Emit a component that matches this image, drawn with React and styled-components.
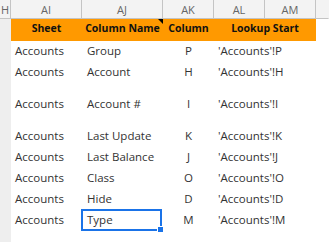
import styled, { createGlobalStyle } from 'styled-components';

const GlobalStyle = createGlobalStyle`
  html, body {
    margin: 0;
    padding: 0;
    background: #ffffff;
  }
  body {
    font-family: "Open Sans", "Liberation Sans", sans-serif;
  }
`;

const Sheet = styled.div`
  width: 329px;
  height: 242px;
  overflow: hidden;
  background: #ffffff;
  display: grid;
  grid-template-columns: 11px 71px 81px 51px 51px 51px 1fr;
  grid-template-rows: 19px 22px 21px 21px 32px 32px 21px 21px 21px 21px 1fr;
`;

const ColHead = styled.div`
  box-sizing: border-box;
  background: #f3f3f3;
  border-right: 1px solid ${(p) => (p.$last ? 'transparent' : '#c4c4c4')};
  border-bottom: 1px solid #c4c4c4;
  color: #666666;
  font-size: 11px;
  display: flex;
  align-items: center;
  justify-content: ${(p) => (p.$left ? 'flex-end' : 'center')};
  padding-right: ${(p) => (p.$left ? '1px' : '0')};
  overflow: hidden;
  white-space: nowrap;
`;

const Gutter = styled.div`
  background: #eeeeee;
`;

const HeadCell = styled.div`
  position: relative;
  grid-column: span ${(p) => p.$span ?? 1};
  background: #ff9900;
  color: #111111;
  font-weight: 700;
  font-size: 10.5px;
  line-height: 14px;
  display: flex;
  align-items: flex-end;
  justify-content: center;
  padding-bottom: 6px;
  white-space: nowrap;
`;

const NoteMark = styled.span`
  position: absolute;
  top: 0;
  right: 0;
  width: 0;
  height: 0;
  border-top: 5px solid #000000;
  border-left: 5px solid transparent;
`;

const Blank = styled.div`
  background: #ffffff;
`;

const Cell = styled.div`
  position: relative;
  box-sizing: border-box;
  color: #333333;
  font-size: 11.5px;
  line-height: 14px;
  display: flex;
  align-items: flex-end;
  justify-content: ${(p) => (p.$center ? 'center' : 'flex-start')};
  padding: 0 0 4px ${(p) => (p.$center ? '0' : `${p.$pad ?? 4}px`)};
  white-space: nowrap;
`;

const Selection = styled.div`
  position: absolute;
  left: -1px;
  top: -1px;
  right: 1px;
  bottom: 0;
  border: 2px solid #1a73e8;
`;

const Handle = styled.span`
  position: absolute;
  right: -4px;
  bottom: -4px;
  width: 5px;
  height: 5px;
  background: #1a73e8;
  border: 1px solid #ffffff;
`;

const rows = [
  ['Group', 'P'],
  ['Account', 'H'],
  ['Account #', 'I'],
  ['Last Update', 'K'],
  ['Last Balance', 'J'],
  ['Class', 'O'],
  ['Hide', 'D'],
  ['Type', 'M'],
];

const Row = ({ name, col, selected }) => (
  <>
    <Gutter />
    <Cell>Accounts</Cell>
    <Cell $pad={5}>
      {name}
      {selected && (
        <Selection>
          <Handle />
        </Selection>
      )}
    </Cell>
    <Cell $center>{col}</Cell>
    <Cell>'Accounts'!{col}</Cell>
    <Cell />
    <Cell />
  </>
);

const App = () => {
  const letters = ['AI', 'AJ', 'AK', 'AL', 'AM'];

  return (
    <>
      <GlobalStyle />
      <Sheet>
        <ColHead $left>H</ColHead>
        {letters.map((l) => (
          <ColHead key={l}>{l}</ColHead>
        ))}
        <ColHead $last />

        <Gutter />
        <HeadCell>Sheet</HeadCell>
        <HeadCell>
          Column Name
          <NoteMark />
        </HeadCell>
        <HeadCell>Column</HeadCell>
        <HeadCell $span={2}>Lookup Start</HeadCell>
        <Blank />

        {rows.map(([name, col], i) => (
          <Row key={name} name={name} col={col} selected={i === rows.length - 1} />
        ))}

        <Gutter />
      </Sheet>
    </>
  );
};

export default App;
